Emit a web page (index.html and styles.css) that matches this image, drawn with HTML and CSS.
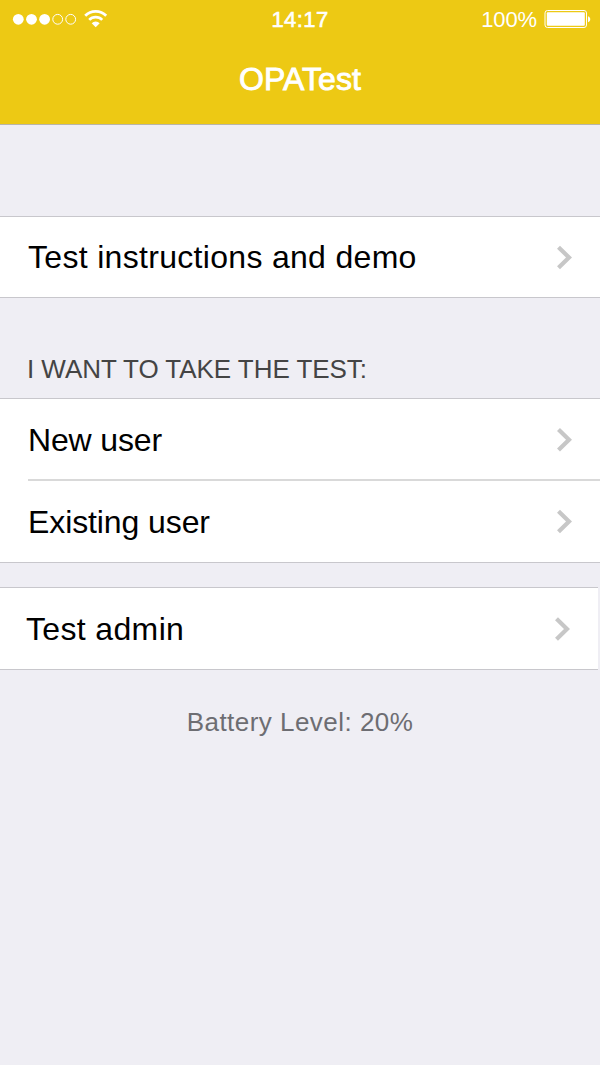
FILE: index.html
```html
<!DOCTYPE html>
<html lang="en">
<head>
<meta charset="utf-8">
<title>OPATest</title>
<link rel="stylesheet" href="styles.css">
</head>
<body>
<header class="header">
  <div class="status">
    <svg class="signal" width="110" height="40" viewBox="0 0 110 40">
      <g fill="#fff"><circle cx="18.3" cy="19.3" r="5.4"/><circle cx="31.5" cy="19.3" r="5.4"/><circle cx="44.6" cy="19.3" r="5.4"/></g>
      <g fill="none" stroke="#fff"><circle cx="57.7" cy="19.3" r="4.9"/><circle cx="70.7" cy="19.3" r="4.9"/></g>
      <g fill="none" stroke="#fff" stroke-width="2.7"><path d="M85.2 15.8a14.6 14.6 0 0 1 21 0"/><path d="M89.2 19.9a9 9 0 0 1 13 0"/></g>
      <path d="M91.7 23.3a5.6 5.6 0 0 1 8 0l-4 4z" fill="#fff"/>
    </svg>
    <span class="time">14:17</span>
    <div class="power">
      <span class="percent">100%</span>
      <svg width="63" height="40" viewBox="1 0 63 40">
        <rect x="9" y="10.5" width="41.5" height="17" rx="2.5" fill="none" stroke="#fff"/>
        <rect x="10.8" y="12.3" width="38" height="13.4" rx="1" fill="#fff"/>
        <path d="M52 16.3c3 .8 3 5.2 0 6z" fill="#fff"/>
      </svg>
    </div>
  </div>
  <h1 class="title">OPATest</h1>
</header>
<main class="content">
  <section class="group group-first">
    <a class="row"><span class="label label-info">Test instructions and demo</span><svg class="chevron" width="18" height="26" viewBox="0 0 18 26"><path d="M2.5 3.2 13 13.5 2.5 23.8"/></svg></a>
  </section>
  <h2 class="section-title"><span>I WANT TO TAKE THE TEST:</span></h2>
  <section class="group">
    <a class="row"><span class="label label-new">New user</span><svg class="chevron" width="18" height="26" viewBox="0 0 18 26"><path d="M2.5 2.4 13 12.7 2.5 23"/></svg></a>
    <div class="divider"></div>
    <a class="row"><span class="label label-existing">Existing user</span><svg class="chevron" width="18" height="26" viewBox="0 0 18 26"><path d="M2.5 2.2 13 12.5 2.5 22.8"/></svg></a>
  </section>
  <section class="group group-admin">
    <a class="row"><span class="label label-admin">Test admin</span><svg class="chevron" width="18" height="26" viewBox="0 0 18 26"><path d="M2.5 2.7 13 13 2.5 23.3"/></svg></a>
  </section>
  <p class="battery">Battery Level: 20%</p>
</main>
</body>
</html>
```
FILE: styles.css
```css
* { box-sizing: border-box; margin: 0; padding: 0; }
body {
  min-height: 1065px;
  background: #efeef4;
  color: #000;
  font-family: "Liberation Sans", Arial, sans-serif;
}
.header {
  height: 125px;
  background: #edc914;
  border-bottom: 1px solid #b9b5a8;
  color: #fff;
}
.status {
  display: grid;
  grid-template-columns: 1fr auto 1fr;
  height: 40px;
}
.status svg { display: block; }
.time {
  font-size: 22px;
  line-height: 40px;
  letter-spacing: 0.4px;
  -webkit-text-stroke: 0.6px #fff;
}
.power { display: flex; justify-content: flex-end; }
.percent { font-size: 22px; line-height: 40px; letter-spacing: -0.1px; }
.title {
  height: 80px;
  font-size: 32px;
  font-weight: 400;
  line-height: 79px;
  letter-spacing: 0.05px;
  text-align: center;
  -webkit-text-stroke: 0.9px #fff;
}
.group {
  background: #fff;
  border-top: 1px solid #c8c7cc;
  border-bottom: 1px solid #c8c7cc;
}
.group-first { margin-top: 91px; }
.row {
  display: flex;
  align-items: center;
  justify-content: space-between;
  height: 81px;
  padding: 0 26px 0 28px;
}
.group-first .row { height: 80px; }
.label { font-size: 32px; line-height: 80px; white-space: nowrap; }
.label-info { letter-spacing: 0.31px; }
.label-new { letter-spacing: -0.15px; }
.label-existing { letter-spacing: -0.1px; }
.label-admin { letter-spacing: 0.35px; }
.chevron { fill: none; stroke: #c7c7c7; stroke-width: 4.2; }
.divider { height: 2px; margin: -1px 0 0 28px; background: #d9d9d9; }
.section-title {
  height: 100px;
  padding: 51px 0 0 27px;
  color: #444;
  font-size: 26px;
  font-weight: 400;
  line-height: 40px;
  letter-spacing: -0.04px;
}
.group-admin { width: 598px; margin-top: 24px; }
.group-admin .row { padding-left: 26px; }
.battery {
  padding-top: 32px;
  color: #6d6d72;
  font-size: 26px;
  line-height: 40px;
  letter-spacing: 0.47px;
  text-align: center;
}
```
